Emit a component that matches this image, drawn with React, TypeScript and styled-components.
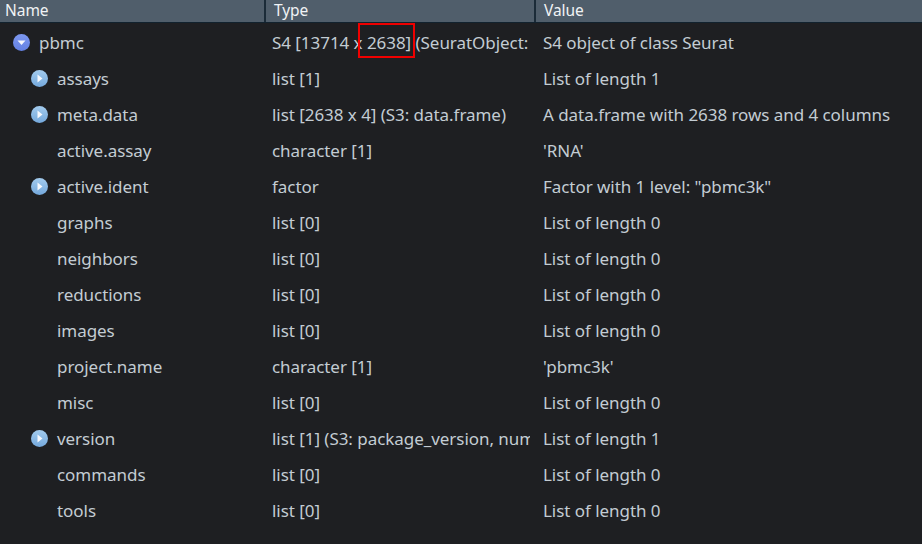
import React, { useId } from 'react';
import styled, { createGlobalStyle } from 'styled-components';

const GlobalStyle = createGlobalStyle`
  html, body {
    margin: 0;
    padding: 0;
    background: #1e1f22;
    overflow: hidden;
  }
`;

const Page = styled.div`
  position: relative;
  width: 922px;
  height: 544px;
  background: #1e1f22;
  color: #c3ccd3;
  font-family: 'Noto Sans', 'Open Sans', sans-serif;
  font-size: 17px;
  letter-spacing: -0.05px;
  overflow: hidden;
`;

const Header = styled.div`
  display: grid;
  grid-template-columns: 266px 270px 1fr;
  height: 22px;
  background: #505e6b;
  border-bottom: 1px solid #12222e;
`;

const HeaderCell = styled.div`
  padding-left: 8px;
  height: 22px;
  line-height: 20px;
  color: #f0f3f5;
  font-size: 15.5px;
  border-right: 2px solid #1b2b38;
  box-sizing: border-box;
  &:first-child {
    padding-left: 5px;
  }
  &:last-child {
    border-right: none;
  }
`;

const Body = styled.div`
  padding-top: 2px;
`;

const Row = styled.div`
  display: grid;
  grid-template-columns: 265px 270px 1fr;
  height: 36px;
  line-height: 36px;
`;

const NameCell = styled.div<{ $depth: number }>`
  display: flex;
  align-items: center;
  padding-left: ${(p) => (p.$depth === 0 ? 13 : 31)}px;
  gap: 9px;
`;

const Spacer = styled.span`
  width: 17px;
`;

const IconSvg = styled.svg`
  flex-shrink: 0;
  margin-bottom: 2px;
`;

const Cell = styled.div`
  padding-left: 7px;
  white-space: nowrap;
  overflow: hidden;
`;

const TypeCell = styled(Cell)`
  margin-right: 5px;
`;

const ValueCell = styled(Cell)`
  padding-left: 8px;
`;

const Highlight = styled.div`
  position: absolute;
  left: 358px;
  top: 23px;
  width: 57px;
  height: 35px;
  border: 2px solid #f00000;
  box-sizing: border-box;
`;

const ExpandIcon: React.FC<{ open?: boolean }> = ({ open }) => {
  const id = useId();
  return (
    <IconSvg width="17" height="17" viewBox="0 0 17 17">
      <defs>
        <linearGradient id={id} x1="0" y1="0" x2="0" y2="1">
          <stop offset="0" stopColor={open ? '#7d98f0' : '#a3cbee'} />
          <stop offset="1" stopColor={open ? '#6380e2' : '#74a8dc'} />
        </linearGradient>
      </defs>
      <circle cx="8.5" cy="8.5" r="8.5" fill={`url(#${id})`} />
      {open ? (
        <path d="M4.5 6.5 H12.5 L8.5 11 Z" fill="#f6f8fd" />
      ) : (
        <path d="M6.5 4.5 L11.5 8.5 L6.5 12.5 Z" fill="#f6f8fd" />
      )}
    </IconSvg>
  );
};

interface Item {
  name: string;
  type: string;
  value: string;
  depth: number;
  icon?: 'open' | 'closed';
}

const items: Item[] = [
  { name: 'pbmc', type: 'S4 [13714 x 2638] (SeuratObject:', value: 'S4 object of class Seurat', depth: 0, icon: 'open' },
  { name: 'assays', type: 'list [1]', value: 'List of length 1', depth: 1, icon: 'closed' },
  { name: 'meta.data', type: 'list [2638 x 4] (S3: data.frame)', value: 'A data.frame with 2638 rows and 4 columns', depth: 1, icon: 'closed' },
  { name: 'active.assay', type: 'character [1]', value: "'RNA'", depth: 1 },
  { name: 'active.ident', type: 'factor', value: 'Factor with 1 level: "pbmc3k"', depth: 1, icon: 'closed' },
  { name: 'graphs', type: 'list [0]', value: 'List of length 0', depth: 1 },
  { name: 'neighbors', type: 'list [0]', value: 'List of length 0', depth: 1 },
  { name: 'reductions', type: 'list [0]', value: 'List of length 0', depth: 1 },
  { name: 'images', type: 'list [0]', value: 'List of length 0', depth: 1 },
  { name: 'project.name', type: 'character [1]', value: "'pbmc3k'", depth: 1 },
  { name: 'misc', type: 'list [0]', value: 'List of length 0', depth: 1 },
  { name: 'version', type: 'list [1] (S3: package_version, num', value: 'List of length 1', depth: 1, icon: 'closed' },
  { name: 'commands', type: 'list [0]', value: 'List of length 0', depth: 1 },
  { name: 'tools', type: 'list [0]', value: 'List of length 0', depth: 1 },
];

const App: React.FC = () => {
  return (
    <Page>
      <GlobalStyle />
      <Header>
        <HeaderCell>Name</HeaderCell>
        <HeaderCell>Type</HeaderCell>
        <HeaderCell>Value</HeaderCell>
      </Header>
      <Body>
        {items.map((item) => (
          <Row key={item.name}>
            <NameCell $depth={item.depth}>
              {item.icon ? <ExpandIcon open={item.icon === 'open'} /> : <Spacer />}
              <span>{item.name}</span>
            </NameCell>
            <TypeCell>{item.type}</TypeCell>
            <ValueCell>{item.value}</ValueCell>
          </Row>
        ))}
      </Body>
      <Highlight />
    </Page>
  );
};

export default App;
